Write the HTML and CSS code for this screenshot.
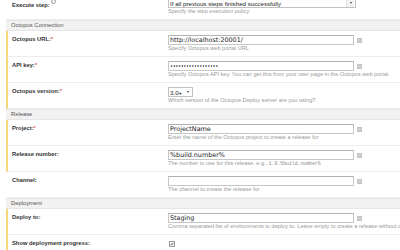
FILE: index.html
```html
<!DOCTYPE html>
<html>
<head>
<meta charset="utf-8">
<title>Octopus Deploy: Create release</title>
<link rel="stylesheet" href="styles.css">
</head>
<body>
<div class="form">
  <div class="row">
    <div class="label">Execute step:<span class="help"></span></div>
    <div class="value">
      <div class="line">
        <span class="select wide"><span class="sel-text">If all previous steps finished successfully</span><span class="arrow"></span></span>
      </div>
      <div class="note">Specify the step execution policy.</div>
    </div>
  </div>

  <div class="section">Octopus Connection</div>

  <div class="row mod">
    <div class="label">Octopus URL:<span class="req">*</span></div>
    <div class="value">
      <div class="line"><input class="text" type="text" value="http://localhost:20001/"><span class="param"></span></div>
      <div class="note">Specify Octopus web portal URL</div>
    </div>
  </div>

  <div class="row mod">
    <div class="label">API key:<span class="req">*</span></div>
    <div class="value">
      <div class="line"><input class="text pw" type="password" value="xxxxxxxxxxxxxxxxxx"><span class="param"></span></div>
      <div class="note">Specify Octopus API key. You can get this from your user page in the Octopus web portal.</div>
    </div>
  </div>

  <div class="row mod">
    <div class="label">Octopus version:<span class="req">*</span></div>
    <div class="value">
      <div class="line">
        <span class="select small"><span class="sel-text">3.0+</span><span class="arrow"></span></span>
      </div>
      <div class="note">Which version of the Octopus Deploy server are you using?</div>
    </div>
  </div>

  <div class="section">Release</div>

  <div class="row mod">
    <div class="label">Project:<span class="req">*</span></div>
    <div class="value">
      <div class="line"><input class="text" type="text" value="ProjectName"><span class="param"></span></div>
      <div class="note">Enter the name of the Octopus project to create a release for</div>
    </div>
  </div>

  <div class="row mod">
    <div class="label">Release number:</div>
    <div class="value">
      <div class="line"><input class="text" type="text" value="%build.number%"><span class="param"></span></div>
      <div class="note">The number to use for this release, e.g., <code>1.0.%build.number%</code></div>
    </div>
  </div>

  <div class="row">
    <div class="label">Channel:</div>
    <div class="value">
      <div class="line"><input class="text" type="text" value=""><span class="param"></span></div>
      <div class="note">The channel to create the release for</div>
    </div>
  </div>

  <div class="section">Deployment</div>

  <div class="row mod">
    <div class="label">Deploy to:</div>
    <div class="value">
      <div class="line"><input class="text" type="text" value="Staging"><span class="param"></span></div>
      <div class="note">Comma separated list of environments to deploy to. Leave empty to create a release without deploying it.</div>
    </div>
  </div>

  <div class="row mod">
    <div class="label">Show deployment progress:</div>
    <div class="value">
      <div class="line"><span class="checkbox"><svg viewBox="0 0 6 6" width="6" height="6"><path d="M1.2 3.1 L2.5 4.4 L4.9 1.4" fill="none" stroke="#333" stroke-width="1.1"/></svg></span></div>
      <div class="note">If checked, the build process will only succeed if the deployment is successful.</div>
    </div>
  </div>
</div>
</body>
</html>
```

FILE: styles.css
```css
html, body {
  margin: 0;
  padding: 0;
  background: #ffffff;
}

body {
  font-family: "Liberation Sans", Arial, sans-serif;
  color: #333333;
  width: 400px;
  height: 250px;
  overflow: hidden;
}

.form {
  margin: -6px 0 0 6px;
}

.row {
  display: grid;
  grid-template-columns: 160px 1fr;
  height: 26px;
  box-sizing: border-box;
  border-left: 2px solid transparent;
  border-bottom: 1px solid #ededed;
}

.row.mod {
  border-left-color: #f8d874;
}

.label {
  font-weight: bold;
  font-size: 5.8px;
  line-height: 7px;
  padding: 5px 0 0 4px;
  color: #333333;
  white-space: nowrap;
}

.req {
  color: #e02020;
  font-weight: normal;
}

.help {
  display: inline-block;
  width: 3px;
  height: 3px;
  border: 0.7px solid #9a9a9a;
  border-radius: 50%;
  margin-left: 1px;
  vertical-align: 3px;
}

.value {
  padding-top: 4px;
  min-width: 0;
}

.line {
  display: flex;
  align-items: center;
  gap: 3px;
  height: 10px;
}

input.text {
  box-sizing: border-box;
  width: 186px;
  height: 10px;
  margin: 0;
  padding: 0 1px;
  border: 1px solid #c6c6c6;
  border-top-color: #b2b2b2;
  background: #ffffff;
  font-family: "DejaVu Sans", Verdana, sans-serif;
  font-size: 6.4px;
  color: #222222;
  outline: none;
}

input.pw {
  font-size: 5.2px;
  letter-spacing: -0.4px;
}

.param {
  width: 5px;
  height: 5px;
  box-sizing: border-box;
  background: #cfcfcf;
  border: 1px solid #c4c4c4;
}

.select {
  box-sizing: border-box;
  height: 10px;
  display: flex;
  align-items: center;
  border: 1px solid #c2c2c2;
  background: #ffffff;
  font-size: 6.2px;
  color: #222222;
  padding-left: 1px;
}

.select.wide {
  width: 188px;
}

.select.small {
  width: 25px;
}

.sel-text {
  flex: 1;
  white-space: nowrap;
  overflow: hidden;
}

.arrow {
  width: 7px;
  height: 8px;
  margin-right: 1px;
  display: flex;
  align-items: center;
  justify-content: center;
  background: #f2f2f2;
  border-left: 1px solid #e2e2e2;
}

.arrow::after {
  content: "";
  border-left: 1.6px solid transparent;
  border-right: 1.6px solid transparent;
  border-top: 2px solid #444444;
}

.select.small .arrow {
  background: transparent;
  border-left: none;
}

.note {
  font-size: 5.6px;
  line-height: 7px;
  color: #9a9a9a;
  white-space: nowrap;
  overflow: hidden;
}

.note code {
  font-family: "Liberation Mono", "Courier New", monospace;
  font-size: 4.8px;
  color: #888888;
}

.checkbox {
  display: inline-flex;
  align-items: center;
  justify-content: center;
  width: 6px;
  height: 6px;
  box-sizing: border-box;
  margin-left: 1px;
  border: 0.6px solid #9a9a9a;
  background: #f4f4f4;
}

.checkbox svg {
  display: block;
}

.section {
  height: 11px;
  box-sizing: border-box;
  background: #f2f2f2;
  border-top: 1px solid #e6e6e6;
  border-bottom: 1px solid #e6e6e6;
  font-size: 5.8px;
  line-height: 9px;
  padding-left: 5px;
  color: #555555;
}
```
